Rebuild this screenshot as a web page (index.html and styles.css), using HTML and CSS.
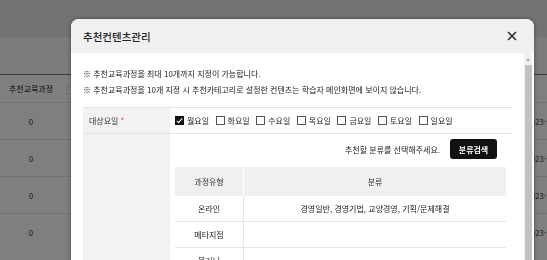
FILE: index.html
```html
<!DOCTYPE html>
<html lang="ko">
<head>
    <meta charset="UTF-8">
    <meta name="viewport" content="width=device-width, initial-scale=1.0">
    <title>추천컨텐츠관리</title>
    <link rel="stylesheet" href="styles.css">
</head>
<body>
    <div class="page">
        <div class="page-top"></div>
        <div class="page-filter"></div>
        <table class="page-table">
            <colgroup>
                <col class="c-count">
                <col class="c-menu">
                <col>
                <col class="c-date">
            </colgroup>
            <tr>
                <th>추천교육과정</th>
                <th class="col-menu">⋮</th>
                <th></th>
                <th></th>
            </tr>
            <tr><td>0</td><td></td><td></td><td class="date">2023-</td></tr>
            <tr><td>0</td><td></td><td></td><td class="date">2023-</td></tr>
            <tr><td>0</td><td></td><td></td><td class="date">2023-</td></tr>
            <tr><td>0</td><td></td><td></td><td class="date">2023-</td></tr>
        </table>
    </div>

    <div class="dim"></div>

    <div class="modal">
        <div class="modal-head">
            <h2>추천컨텐츠관리</h2>
            <button class="close-btn" type="button">
                <svg width="10" height="10" viewBox="0 0 10 10">
                    <path d="M1 1 L9 9 M9 1 L1 9" stroke="#333" stroke-width="1.7" fill="none"/>
                </svg>
            </button>
        </div>
        <div class="modal-body">
            <div class="modal-content">
                <p class="note">※ 추천교육과정을 최대 10개까지 지정이 가능합니다.</p>
                <p class="note">※ 추천교육과정을 10개 지정 시 추천카테고리로 설정한 컨텐츠는 학습자 메인화면에 보이지 않습니다.</p>

                <table class="form-table">
                    <tr>
                        <th>대상요일<span class="req">*</span></th>
                        <td>
                            <div class="days">
                                <label class="check on"><span class="box"></span>월요일</label>
                                <label class="check"><span class="box"></span>화요일</label>
                                <label class="check"><span class="box"></span>수요일</label>
                                <label class="check"><span class="box"></span>목요일</label>
                                <label class="check"><span class="box"></span>금요일</label>
                                <label class="check"><span class="box"></span>토요일</label>
                                <label class="check"><span class="box"></span>일요일</label>
                            </div>
                        </td>
                    </tr>
                    <tr>
                        <th></th>
                        <td>
                            <div class="cate-bar">
                                <span>추천할 분류를 선택해주세요.</span>
                                <button class="btn-dark" type="button">분류검색</button>
                            </div>
                            <table class="cate-table">
                                <tr><th class="c-type">과정유형</th><th>분류</th></tr>
                                <tr><td>온라인</td><td>경영일반, 경영기법, 교양경영, 기획/문제해결</td></tr>
                                <tr><td>메타지점</td><td></td></tr>
                                <tr><td>블러닝</td><td></td></tr>
                            </table>
                        </td>
                    </tr>
                </table>
            </div>
            <div class="scrollbar">
                <span class="arrow"></span>
                <span class="thumb"></span>
            </div>
        </div>
    </div>
</body>
</html>
```

FILE: styles.css
```css
html, body {
    margin: 0;
    height: 100%;
    overflow: hidden;
}
body {
    font-family: "Noto Sans CJK KR", "Noto Sans", sans-serif;
    color: #333;
    background-color: #fff;
}

/* page behind the dialog */
.page-top {
    height: 37px;
    background-color: #e6e6e6;
}
.page-filter {
    height: 38px;
    background-color: #f6f6f6;
    border-bottom: 1px solid #777;
    box-sizing: border-box;
}
.page-table {
    width: 100%;
    table-layout: fixed;
    border-collapse: collapse;
    font-size: 8px;
}
.c-count { width: 62px; }
.c-menu { width: 4px; }
.c-date { width: 21px; }
.page-table th {
    height: 27px;
    font-weight: normal;
    color: #222;
    text-align: center;
    padding: 0;
}
.page-table th.col-menu {
    color: #999;
    font-size: 10px;
}
.page-table td {
    height: 36px;
    border-top: 1px solid #e0e0e0;
    text-align: center;
    padding: 0;
    color: #333;
    white-space: nowrap;
}
.page-table td.date {
    text-align: left;
}

.dim {
    position: fixed;
    inset: 0;
    background-color: rgba(0, 0, 0, 0.5);
}

/* dialog */
.modal {
    position: absolute;
    left: 71px;
    top: 19px;
    width: 463px;
    height: 300px;
    background-color: #fff;
    border-radius: 8px;
    box-shadow: 0 0 4px rgba(0, 0, 0, 0.4);
    overflow: hidden;
    display: flex;
    flex-direction: column;
}
.modal-head {
    height: 34px;
    background-color: #f0f0f0;
    display: flex;
    align-items: center;
    justify-content: space-between;
    padding: 0 17px 0 12px;
    flex-shrink: 0;
}
.modal-head h2 {
    margin: 0;
    font-size: 10.5px;
    font-weight: 500;
    color: #222;
}
.close-btn {
    background: none;
    border: none;
    padding: 0;
    width: 10px;
    height: 10px;
    display: flex;
}
.modal-body {
    flex: 1;
    display: flex;
    padding-right: 2px;
}
.modal-content {
    flex: 1;
    padding: 13px 12px 0 12px;
}
.note {
    margin: 0;
    font-size: 8px;
    line-height: 16px;
    color: #222;
}

.scrollbar {
    width: 8px;
    background-color: #f1f1f1;
    display: flex;
    flex-direction: column;
    align-items: center;
}
.scrollbar .arrow {
    margin-top: 5px;
    width: 0;
    height: 0;
    border-left: 2px solid transparent;
    border-right: 2px solid transparent;
    border-bottom: 3px solid #a3a3a3;
}
.scrollbar .thumb {
    margin-top: 4px;
    width: 7px;
    flex: 1;
    background-color: #c1c1c1;
}

.form-table {
    margin-top: 9px;
    width: 429px;
    border-collapse: collapse;
    border-top: 1px solid #e3e3e3;
}
.form-table > tbody > tr > th {
    width: 87px;
    background-color: #f2f2f2;
    font-size: 8px;
    font-weight: normal;
    text-align: left;
    vertical-align: top;
    padding: 0 0 0 6px;
    box-sizing: border-box;
    line-height: 25px;
    border-bottom: 1px solid #e3e3e3;
    color: #333;
}
.form-table > tbody > tr > td {
    padding: 0 6px 0 5px;
    border-bottom: 1px solid #e3e3e3;
}
.req {
    color: #e8334a;
    margin-left: 2px;
}
.days {
    display: flex;
    height: 25px;
    align-items: center;
    gap: 6.5px;
}
.check {
    display: flex;
    align-items: center;
    gap: 3px;
    font-size: 8px;
    color: #222;
}
.check .box {
    width: 9px;
    height: 9px;
    border: 1px solid #555;
    box-sizing: border-box;
    background-color: #fff;
    position: relative;
}
.check.on .box {
    background-color: #111;
    border-color: #111;
}
.check.on .box::after {
    content: "";
    position: absolute;
    left: 2px;
    top: 0;
    width: 2px;
    height: 5px;
    border: solid #fff;
    border-width: 0 1.5px 1.5px 0;
    transform: rotate(40deg);
}

.cate-bar {
    display: flex;
    justify-content: flex-end;
    align-items: center;
    gap: 10px;
    padding: 5px 9px 0 0;
    font-size: 8px;
    color: #222;
}
.btn-dark {
    width: 47px;
    height: 20px;
    background-color: #111;
    color: #fff;
    border: none;
    border-radius: 3px;
    font-family: inherit;
    font-size: 8px;
    font-weight: bold;
    padding: 0;
}
.cate-table {
    margin-top: 8px;
    width: 100%;
    border-collapse: collapse;
    font-size: 8px;
}
.cate-table th {
    height: 27px;
    background-color: #f0f0f0;
    font-weight: normal;
    color: #333;
    border-left: 1px solid #fff;
}
.cate-table th:first-child {
    border-left: none;
}
.cate-table .c-type {
    width: 66px;
}
.cate-table td {
    height: 25px;
    text-align: center;
    border-bottom: 1px solid #e6e6e6;
    border-left: 1px solid #e6e6e6;
    color: #222;
    padding: 0;
}
.cate-table td:first-child {
    border-left: none;
}
```
